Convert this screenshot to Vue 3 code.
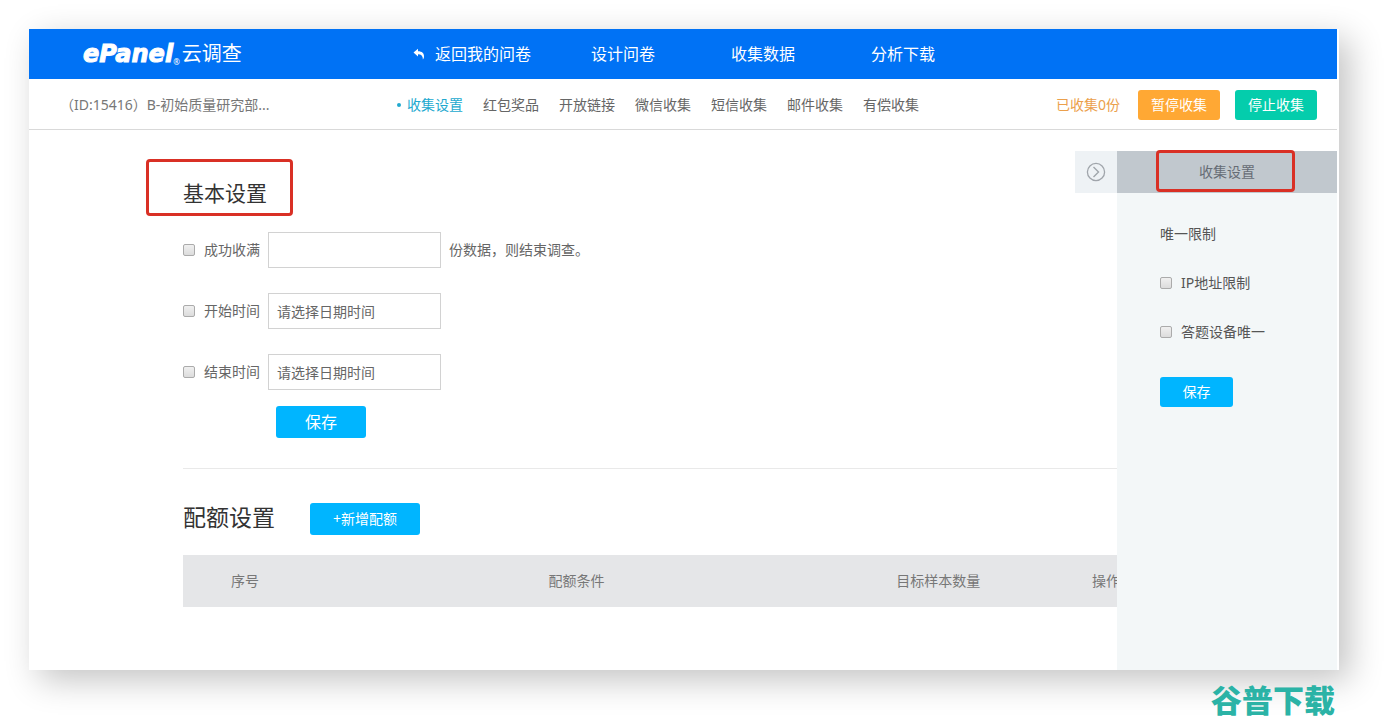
<script setup>
import { ref } from 'vue'

const navItems = ['设计问卷', '收集数据', '分析下载']
const tabs = ['收集设置', '红包奖品', '开放链接', '微信收集', '短信收集', '邮件收集', '有偿收集']
const activeTab = ref('收集设置')
const columns = ['序号', '配额条件', '目标样本数量', '操作']

const limit = ref('')
const startTime = ref('')
const endTime = ref('')
</script>

<template>
  <div class="page">
    <div class="window">
      <header class="topbar">
        <a class="logo" href="#">
          <span class="logo-name">ePanel</span><span class="logo-mark">®</span><span class="logo-cn">云调查</span>
        </a>
        <nav class="nav">
          <a class="nav-item back" href="#">
            <svg class="back-icon" viewBox="0 0 12 12" aria-hidden="true">
              <path d="M0.5 4.6 5 0.8V3.2C9 3.2 11.4 5.2 11 9.2 10.8 10.2 10.4 10.9 9.9 11.5 10 8 8.2 6.3 5 6.3V8.5Z" fill="#fff" />
            </svg>
            <span>返回我的问卷</span>
          </a>
          <a v-for="item in navItems" :key="item" class="nav-item" href="#">{{ item }}</a>
        </nav>
      </header>

      <div class="subbar">
        <div class="survey-name">（ID:15416）B-初始质量研究部...</div>
        <nav class="tabs">
          <a
            v-for="tab in tabs"
            :key="tab"
            class="tab"
            :class="{ active: tab === activeTab }"
            href="#"
            @click.prevent="activeTab = tab"
          >{{ tab }}</a>
        </nav>
        <div class="status">
          <span class="count">已收集0份</span>
          <button class="btn pause" type="button">暂停收集</button>
          <button class="btn stop" type="button">停止收集</button>
        </div>
      </div>

      <main class="body">
        <section class="basic">
          <h2 class="title marked">基本设置</h2>
          <div class="rows">
            <div class="row">
              <label class="check"><input type="checkbox" />成功收满</label>
              <input v-model="limit" class="field" type="text" aria-label="成功收满份数" />
              <span class="suffix">份数据，则结束调查。</span>
            </div>
            <div class="row">
              <label class="check"><input type="checkbox" />开始时间</label>
              <input v-model="startTime" class="field" type="text" placeholder="请选择日期时间" aria-label="开始时间" />
            </div>
            <div class="row">
              <label class="check"><input type="checkbox" />结束时间</label>
              <input v-model="endTime" class="field" type="text" placeholder="请选择日期时间" aria-label="结束时间" />
            </div>
          </div>
          <button class="btn save" type="button">保存</button>
        </section>

        <section class="quota">
          <div class="quota-head">
            <h2 class="title large">配额设置</h2>
            <button class="btn add" type="button">+新增配额</button>
          </div>
          <table class="table">
            <thead>
              <tr>
                <th v-for="col in columns" :key="col" scope="col">{{ col }}</th>
              </tr>
            </thead>
          </table>
        </section>

        <aside class="drawer">
          <button class="toggle" type="button" aria-label="收起">
            <svg viewBox="0 0 20 20" width="20" height="20" fill="none" stroke="#a0a5ab" aria-hidden="true">
              <circle cx="10" cy="10" r="8.6" stroke-width="1.3" />
              <path d="M7.5 5 12.5 10 7.5 15" stroke-width="1.4" />
            </svg>
          </button>
          <div class="panel">
            <h3 class="panel-title">收集设置</h3>
            <div class="panel-body">
              <p class="panel-label">唯一限制</p>
              <label class="check"><input type="checkbox" />IP地址限制</label>
              <label class="check"><input type="checkbox" />答题设备唯一</label>
              <button class="btn panel-save" type="button">保存</button>
            </div>
          </div>
        </aside>
      </main>
    </div>
    <div class="watermark">谷普下载</div>
  </div>
</template>

<style>
body {
  margin: 0;
  background: #fff;
}
</style>

<style scoped>
.page {
  position: relative;
  display: flex;
  box-sizing: border-box;
  min-height: 100vh;
  padding: 29px 52px 51px 29px;
  overflow: hidden;
  font-family: "Noto Sans", "Noto Sans CJK SC", sans-serif;
  font-size: 14px;
  line-height: 20px;
  color: #666;
}

.page a {
  text-decoration: none;
}

.window {
  display: flex;
  flex: 1;
  flex-direction: column;
  min-width: 0;
  padding-right: 2px;
  background: #fff;
  box-shadow: 10px 10px 32px rgba(0, 0, 0, 0.24);
}

.topbar {
  display: flex;
  align-items: center;
  height: 50px;
  background: #0072f5;
}

.logo {
  display: flex;
  align-items: center;
  box-sizing: border-box;
  width: 384px;
  padding-left: 54px;
  color: #fff;
}

.logo-name {
  font: italic 700 24px/32px "DejaVu Sans", sans-serif;
  -webkit-text-stroke: 1px #fff;
}

.logo-mark {
  align-self: flex-end;
  font-size: 8px;
  line-height: 16px;
}

.logo-cn {
  margin-left: 2px;
  font-size: 20px;
  line-height: 32px;
}

.nav {
  display: flex;
}

.nav-item {
  width: 140px;
  font-size: 16px;
  line-height: 50px;
  text-align: center;
  color: #fff;
}

.back {
  display: flex;
  align-items: center;
  gap: 10px;
}

.back-icon {
  width: 12px;
  height: 12px;
}

.subbar {
  display: flex;
  align-items: center;
  box-sizing: border-box;
  height: 51px;
  padding: 2px 20px 0 31px;
  border-bottom: 1px solid #d9d9d9;
}

.survey-name {
  width: 347px;
  color: #777;
}

.tabs {
  display: flex;
  gap: 20px;
}

.tab {
  position: relative;
  color: #666;
}

.tab.active {
  color: #22a9cf;
}

.tab.active::before {
  position: absolute;
  top: 8px;
  left: -10px;
  width: 4px;
  height: 4px;
  border-radius: 50%;
  background: #22a9cf;
  content: "";
}

.status {
  display: flex;
  align-items: center;
  margin-left: auto;
}

.count {
  margin-right: 18px;
  color: #eba04c;
}

.btn {
  padding: 0;
  border: 0;
  border-radius: 3px;
  background: #00b5ff;
  font: inherit;
  color: #fff;
}

.pause,
.stop {
  width: 82px;
  height: 30px;
}

.pause {
  margin-right: 15px;
  background: #ffa834;
}

.stop {
  background: #04cdac;
}

.body {
  position: relative;
  flex: 1;
  padding: 45px 155px 0 154px;
}

.title {
  margin: 0;
  font-size: 21px;
  font-weight: 400;
  line-height: 36px;
  color: #333;
}

.title.large {
  font-size: 23px;
  line-height: 28px;
}

.marked,
.panel-title {
  position: relative;
}

.marked::before,
.panel-title::before {
  position: absolute;
  box-sizing: border-box;
  border: 3px solid #d93025;
  border-radius: 4px;
  content: "";
}

.marked::before {
  top: -16px;
  left: -37px;
  width: 147px;
  height: 57px;
}

.rows {
  display: grid;
  gap: 25px;
  margin-top: 21px;
}

.row {
  display: flex;
  align-items: center;
}

.check {
  display: flex;
  align-items: center;
  gap: 9px;
}

.check input {
  box-sizing: border-box;
  width: 12px;
  height: 12px;
  margin: 0;
  border: 1px solid #ababab;
  border-radius: 2px;
  background: linear-gradient(#f0f0f0, #dcdcdc);
  appearance: none;
}

.check input:checked {
  background: #00b5ff;
}

.field {
  box-sizing: border-box;
  width: 173px;
  height: 36px;
  margin: 0 8px;
  padding: 0 8px;
  border: 1px solid #d2d2d2;
  background: #fff;
  font: inherit;
  color: #666;
}

.field::placeholder {
  color: #666;
  opacity: 1;
}

.save {
  width: 90px;
  height: 32px;
  margin: 16px 0 0 93px;
  font-size: 16px;
}

.basic {
  padding-bottom: 30px;
  border-bottom: 1px solid #e9e9e9;
}

.quota {
  padding-top: 34px;
}

.quota-head {
  display: flex;
  align-items: flex-start;
  gap: 35px;
  margin-bottom: 20px;
}

.add {
  width: 110px;
  height: 32px;
}

.table {
  width: 100%;
  border-collapse: collapse;
  table-layout: fixed;
  background: #e5e6e8;
}

.table th {
  height: 52px;
  padding: 0;
  font-weight: 400;
  color: #777;
}

.table th:nth-child(1) {
  width: 12.4%;
}

.table th:nth-child(2) {
  width: 54%;
}

.table th:nth-child(3) {
  width: 18.4%;
}

.drawer {
  position: absolute;
  top: 21px;
  right: 0;
  bottom: 0;
  display: flex;
  align-items: flex-start;
}

.toggle {
  display: flex;
  align-items: center;
  justify-content: center;
  width: 42px;
  height: 42px;
  padding: 0;
  border: 0;
  background: #eef2f5;
}

.panel {
  align-self: stretch;
  width: 220px;
  background: #f3f7f8;
}

.panel-title {
  margin: 0;
  background: #c1c8ce;
  font-size: 14px;
  font-weight: 400;
  line-height: 42px;
  text-align: center;
  color: #666c75;
}

.panel-title::before {
  top: -1px;
  left: 39px;
  width: 139px;
  height: 42px;
}

.panel-body {
  display: flex;
  flex-direction: column;
  gap: 29px;
  align-items: flex-start;
  padding: 31px 0 0 43px;
  color: #555;
}

.panel-label {
  margin: 0;
}

.panel-save {
  width: 73px;
  height: 30px;
  margin-top: 6px;
}

.watermark {
  position: absolute;
  right: 56px;
  bottom: 5px;
  font: 900 31px/34px "Noto Sans CJK SC", sans-serif;
  color: #2bb3a6;
}
</style>
